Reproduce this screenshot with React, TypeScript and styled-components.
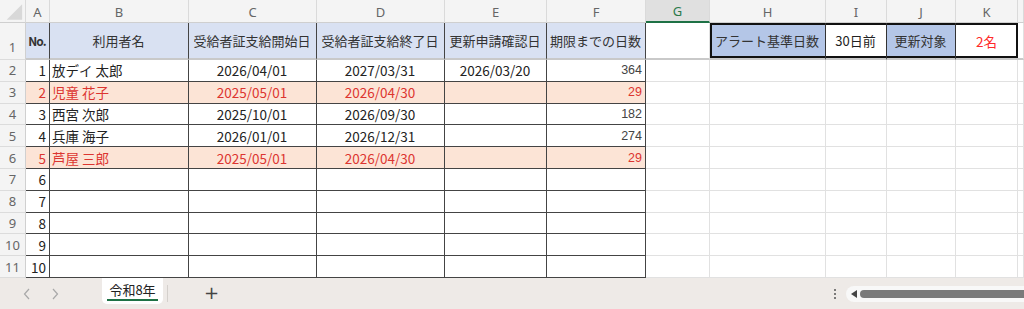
import styled, { createGlobalStyle, css } from 'styled-components'

const GlobalStyle = createGlobalStyle`
  html, body {
    margin: 0;
    padding: 0;
    background: #fff;
    overflow: hidden;
  }
  body {
    font-family: "Noto Sans CJK JP", "Noto Sans", sans-serif;
  }
`

const colWidths = [26, 24, 139, 128, 128, 102, 99, 64, 116, 61, 69, 62, 6]
const colNames = ['', 'A', 'B', 'C', 'D', 'E', 'F', 'G', 'H', 'I', 'J', 'K', '']

const DARK = '#444'
const LIGHT = '#e1e1e1'
const RED = '#dc3530'

const Page = styled.div`
  width: 1024px;
  height: 309px;
  display: flex;
  flex-direction: column;
`

const Sheet = styled.div`
  display: grid;
  grid-template-columns: ${colWidths.map((w) => w + 'px').join(' ')};
  grid-template-rows: 23px 37px repeat(10, 21.8px);
  height: 278px;
  overflow: hidden;
`

const ColHead = styled.div<{ $active?: boolean }>`
  box-sizing: border-box;
  display: flex;
  align-items: center;
  justify-content: center;
  background: ${(p) => (p.$active ? '#e0e0e0' : '#f4f4f4')};
  border-right: 1px solid #dadada;
  border-bottom: ${(p) => (p.$active ? '2px solid #1e7145' : '1px solid #cfcfcf')};
  color: ${(p) => (p.$active ? '#2b7a4b' : '#666')};
  font-family: "Noto Sans", sans-serif;
  font-size: 13px;
  padding-top: 1px;
`

const Corner = styled.div`
  box-sizing: border-box;
  background: #f4f4f4;
  border-right: 1px solid #dadada;
  border-bottom: 1px solid #cfcfcf;
  display: flex;
  align-items: flex-start;
  justify-content: flex-start;
`

const RowHead = styled.div<{ $bottom?: boolean }>`
  box-sizing: border-box;
  display: flex;
  justify-content: center;
  align-items: ${(p) => (p.$bottom ? 'flex-end' : 'center')};
  padding-bottom: ${(p) => (p.$bottom ? '3px' : '0')};
  background: #f4f4f4;
  border-right: 1px solid #d0d0d0;
  border-bottom: 1px solid #dcdcdc;
  color: #666;
  font-family: "Noto Sans", sans-serif;
  font-size: 13px;
`

type CellProps = {
  $bg?: string
  $align?: 'left' | 'center' | 'right'
  $color?: string
  $line?: string
  $freeze?: boolean
  $small?: boolean
  $label?: boolean
  $box?: 'left' | 'mid' | 'right'
}

const Cell = styled.div<CellProps>`
  box-sizing: border-box;
  display: flex;
  align-items: center;
  justify-content: ${(p) =>
    p.$align === 'right' ? 'flex-end' : p.$align === 'center' ? 'center' : 'flex-start'};
  padding: 0 3px 0 2px;
  background: ${(p) => p.$bg || '#fff'};
  color: ${(p) => p.$color || '#222'};
  border-right: 1px solid ${(p) => p.$line || LIGHT};
  border-bottom: ${(p) => (p.$freeze ? '2px solid #c9c9c9' : `1px solid ${p.$line || LIGHT}`)};
  font-size: ${(p) => (p.$small ? '12.5px' : p.$label ? '13px' : '13.5px')};
  font-family: ${(p) =>
    p.$small ? '"Liberation Sans", sans-serif' : '"Noto Sans CJK JP", sans-serif'};
  white-space: nowrap;
  overflow: hidden;
  ${(p) =>
    p.$box &&
    css`
      border-right: ${p.$box === 'right' ? 'none' : '1px solid #333'};
      box-shadow: inset 0 2px 0 #111, inset 0 -2px 0 #111
        ${p.$box === 'left' ? ', inset 2px 0 0 #111' : ''}
        ${p.$box === 'right' ? ', inset -2px 0 0 #111' : ''};
    `}
`

const NoLabel = styled.b`
  font-size: 12px;
  letter-spacing: -1px;
`

const BottomBar = styled.div`
  flex: 1;
  display: flex;
  align-items: stretch;
  background: #eeeae7;
  font-family: "Noto Sans CJK JP", sans-serif;
`

const NavButtons = styled.div`
  width: 102px;
  display: flex;
  align-items: center;
  gap: 20px;
  padding-left: 23px;
  box-sizing: border-box;
  color: #aaa;
`

const Tab = styled.div`
  width: 61px;
  height: 26px;
  background: #fff;
  border-radius: 0 0 5px 5px;
  display: flex;
  flex-direction: column;
  align-items: center;
  justify-content: center;
  font-size: 13px;
  color: #222;
  padding-top: 1px;
  box-sizing: border-box;
`

const TabLabel = styled.span`
  border-bottom: 2px solid #1e7145;
  padding: 0 2px 1px;
  line-height: 16px;
`

const Divider = styled.div`
  width: 1px;
  height: 17px;
  background: #d4d0cc;
  align-self: center;
  margin-left: 4px;
`

const AddButton = styled.div`
  margin-left: 36px;
  align-self: center;
  font-size: 18px;
  color: #444;
  font-family: "DejaVu Sans", sans-serif;
  line-height: 1;
  margin-top: -2px;
`

const RightTools = styled.div`
  margin-left: auto;
  display: flex;
  align-items: center;
  gap: 10px;
`

const Dots = styled.div`
  display: flex;
  flex-direction: column;
  gap: 2px;
  span {
    width: 2px;
    height: 2px;
    background: #555;
    border-radius: 1px;
  }
`

const ScrollTrack = styled.div`
  width: 178px;
  height: 16px;
  background: #f8f8f8;
  border-radius: 8px 0 0 8px;
  display: flex;
  align-items: center;
  padding-left: 5px;
  gap: 2px;
  box-sizing: border-box;
`

const ScrollThumb = styled.div`
  flex: 1;
  height: 8px;
  background: #7a7a7a;
  border-radius: 4px 0 0 4px;
`

type Row = {
  no: number
  name?: string
  start?: string
  end?: string
  confirm?: string
  days?: number
  alert?: boolean
}

const rows: Row[] = [
  { no: 1, name: '放デイ 太郎', start: '2026/04/01', end: '2027/03/31', confirm: '2026/03/20', days: 364 },
  { no: 2, name: '児童 花子', start: '2025/05/01', end: '2026/04/30', days: 29, alert: true },
  { no: 3, name: '西宮 次郎', start: '2025/10/01', end: '2026/09/30', days: 182 },
  { no: 4, name: '兵庫 海子', start: '2026/01/01', end: '2026/12/31', days: 274 },
  { no: 5, name: '芦屋 三郎', start: '2025/05/01', end: '2026/04/30', days: 29, alert: true },
  { no: 6 },
  { no: 7 },
  { no: 8 },
  { no: 9 },
  { no: 10 },
]

const headers = ['利用者名', '受給者証支給開始日', '受給者証支給終了日', '更新申請確認日', '期限までの日数']

const Chevron = ({ dir }: { dir: 'left' | 'right' }) => (
  <svg width="8" height="12" viewBox="0 0 8 12">
    <path
      d={dir === 'left' ? 'M6 1 L1.5 6 L6 11' : 'M2 1 L6.5 6 L2 11'}
      fill="none"
      stroke="#a8a8a8"
      strokeWidth="1.2"
    />
  </svg>
)

const App = () => {
  return (
    <Page>
      <GlobalStyle />
      <Sheet>
        <Corner>
          <svg width="26" height="23" viewBox="0 0 26 23">
            <polygon points="23,4 23,20 7,20" fill="#d8d8d8" />
          </svg>
        </Corner>
        {colNames.slice(1).map((c, i) => (
          <ColHead key={'h' + i} $active={c === 'G'}>
            {c}
          </ColHead>
        ))}

        <RowHead $bottom>1</RowHead>
        <Cell $bg="#d9e1f2" $align="center" $line={DARK} $freeze $color="#333">
          <NoLabel>No.</NoLabel>
        </Cell>
        {headers.map((h) => (
          <Cell key={h} $bg="#d9e1f2" $align="center" $line={DARK} $freeze $label $color="#333">
            {h}
          </Cell>
        ))}
        <Cell $freeze />
        <Cell $freeze $bg="#b4c6e7" $align="center" $box="left" $label $color="#333">
          アラート基準日数
        </Cell>
        <Cell $freeze $align="center" $box="mid" $label>
          30日前
        </Cell>
        <Cell $freeze $bg="#b4c6e7" $align="center" $box="mid" $label $color="#333">
          更新対象
        </Cell>
        <Cell $freeze $align="center" $box="right" $color="#ff2a2a">
          2名
        </Cell>
        <Cell $freeze />

        {rows.map((r, i) => {
          const bg = r.alert ? '#fce4d6' : '#fff'
          const color = r.alert ? RED : '#222'
          return [
            <RowHead key={'r' + i}>{i + 2}</RowHead>,
            <Cell key={'a' + i} $bg={bg} $color={color} $line={DARK} $align="right">
              {r.no}
            </Cell>,
            <Cell key={'b' + i} $bg={bg} $color={color} $line={DARK}>
              {r.name}
            </Cell>,
            <Cell key={'c' + i} $bg={bg} $color={color} $line={DARK} $align="center">
              {r.start}
            </Cell>,
            <Cell key={'d' + i} $bg={bg} $color={color} $line={DARK} $align="center">
              {r.end}
            </Cell>,
            <Cell key={'e' + i} $bg={bg} $color={color} $line={DARK} $align="center">
              {r.confirm}
            </Cell>,
            <Cell
              key={'f' + i}
              $bg={bg}
              $color={r.alert ? RED : '#444'}
              $line={DARK}
              $align="right"
              $small
            >
              {r.days}
            </Cell>,
            ...['g', 'h', 'i', 'j', 'k', 'l'].map((k) => <Cell key={k + i} />),
          ]
        })}
      </Sheet>

      <BottomBar>
        <NavButtons>
          <Chevron dir="left" />
          <Chevron dir="right" />
        </NavButtons>
        <Tab>
          <TabLabel>令和8年</TabLabel>
        </Tab>
        <Divider />
        <AddButton>+</AddButton>
        <RightTools>
          <Dots>
            <span />
            <span />
            <span />
          </Dots>
          <ScrollTrack>
            <svg width="7" height="8" viewBox="0 0 7 8">
              <polygon points="6,0 6,8 0,4" fill="#444" />
            </svg>
            <ScrollThumb />
          </ScrollTrack>
        </RightTools>
      </BottomBar>
    </Page>
  )
}

export default App
